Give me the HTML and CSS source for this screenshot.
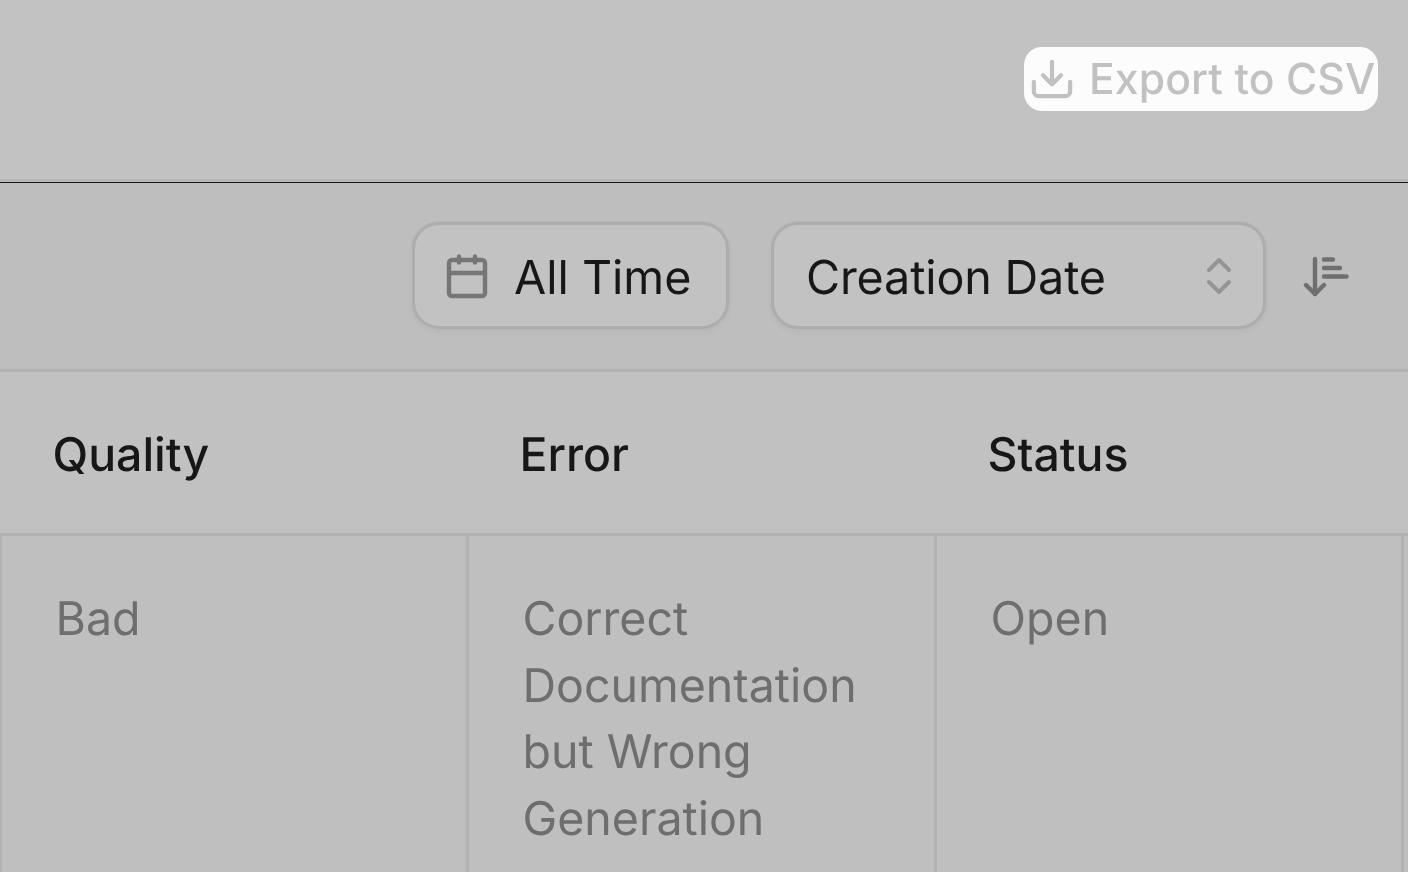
FILE: index.html
```html
<!DOCTYPE html>
<html lang="en">
<head>
<meta charset="utf-8">
<title>Export</title>
<link rel="stylesheet" href="styles.css">
</head>
<body>
<div class="page">
  <header class="topbar">
    <button class="export">
      <svg class="export-icon" viewBox="0 0 44 44" fill="none" stroke="currentColor" stroke-width="4.4" stroke-linecap="round" stroke-linejoin="round"><path d="M22 4v23"/><path d="M12.500 18l9.500 9.500 9.500-9.500"/><path d="M3 25v10a5 5 0 0 0 5 5h28a5 5 0 0 0 5-5V25"/></svg>
      <span class="label export-label">Export to CSV</span>
    </button>
  </header>
  <section class="filters">
    <button class="control time">
      <svg class="cal" viewBox="0 0 44 46" fill="none" stroke="currentColor" stroke-width="4.400" stroke-linecap="round" stroke-linejoin="round"><rect x="4" y="7" width="36" height="36" rx="3"/><path d="M4 20h36"/><path d="M14 3.500v6"/><path d="M30 3.500v6"/></svg>
      <span class="label control-label">All Time</span>
    </button>
    <button class="control sort">
      <span class="label control-label tight">Creation Date</span>
      <svg class="updown" viewBox="0 0 28 40" fill="none" stroke="currentColor" stroke-width="4" stroke-linecap="round" stroke-linejoin="round"><path d="M4 14L14 4l10 10"/><path d="M4 26l10 10 10-10"/></svg>
    </button>
    <svg class="order" viewBox="0 0 46 41" fill="none" stroke="currentColor" stroke-width="4.400" stroke-linecap="round" stroke-linejoin="round"><path d="M12 3v35"/><path d="M3 29l9 9 9-9"/><path d="M21 3.500h9"/><path d="M21 12h16"/><path d="M21 20.500h22.500"/></svg>
  </section>
  <div class="thead">
    <div class="th label">Quality</div>
    <div class="th label">Error</div>
    <div class="th label">Status</div>
  </div>
  <div class="tbody">
    <div class="td label">Bad</div>
    <div class="td label">Correct Documentation but Wrong Generation</div>
    <div class="td label">Open</div>
    <div class="td last"></div>
  </div>
</div>
</body>
</html>
```
FILE: styles.css
```css
html, body { margin: 0; padding: 0; }
body { background: #c0c0c0; font-family: Inter, "Liberation Sans", sans-serif; overflow: hidden; }
.page { width: 1408px; height: 872px; overflow: hidden; display: flex; flex-direction: column; }
.label { text-rendering: geometricPrecision; will-change: transform; }
.topbar { height: 183px; flex: none; display: flex; justify-content: flex-end; align-items: flex-start; padding: 47px 30px 0 0; box-sizing: border-box; background: #c2c2c2; border-bottom: 1.500px solid #161616; box-shadow: inset 0 -3px 0 #b6b6b6; }
.export { display: flex; align-items: center; gap: 16px; height: 64px; width: 354px; padding: 0 0 0 7px; box-sizing: border-box; border: 0; border-radius: 18px; background: #fcfcfc; color: #c1c1c1; font: 500 42.670px/64px Inter, sans-serif; white-space: nowrap; }
.export-label { letter-spacing: .1px; padding-top: 1px; }
.export-icon { width: 42px; height: 42px; flex: none; }
.filters { height: 189px; flex: none; box-sizing: border-box; display: flex; align-items: center; justify-content: flex-end; gap: 37px; padding: 0 59px 0 0; background: #bebebe; border-bottom: 3px solid #b2b2b2; }
.control { height: 107px; margin-top: -1px; box-sizing: border-box; display: flex; align-items: center; border: 3px solid #adadad; border-radius: 27px; background: #c2c2c2; color: #171717; font: 400 46.670px/66px Inter, sans-serif; box-shadow: 0 0 0 1px #b8b8b8, 0 3px 6px rgba(0,0,0,.04); white-space: nowrap; }
.control-label { padding-top: 5px; }
.tight { letter-spacing: -.15px; }
.time { width: 317px; padding: 0 0 0 30px; gap: 25px; margin-right: 5px; }
.sort { width: 495px; padding: 0 30px 0 32px; justify-content: space-between; }
.cal { width: 44px; height: 46px; color: #767676; flex: none; }
.updown { width: 28px; height: 40px; color: #949494; flex: none; }
.order { width: 46px; height: 41px; color: #6f6f6f; flex: none; }
.thead { height: 164px; flex: none; box-sizing: border-box; display: grid; grid-template-columns: 467px 468px 467px 1fr; background: #c1c1c1; border-bottom: 3px solid #b2b2b2; }
.th { padding: 50px 0 0 52.500px; color: #171717; font: 500 46.400px/66px Inter, sans-serif; }
.tbody { flex: 1; margin-left: -1px; display: grid; grid-template-columns: 467px 468px 467px 1fr; background: #bfbfbf; }
.td { box-sizing: border-box; padding: 50px 50px 0 53.500px; border-left: 3px solid #b2b2b2; color: #6e6e6e; font: 400 46.500px/66.600px Inter, sans-serif; }
.last { padding: 0; }
```
